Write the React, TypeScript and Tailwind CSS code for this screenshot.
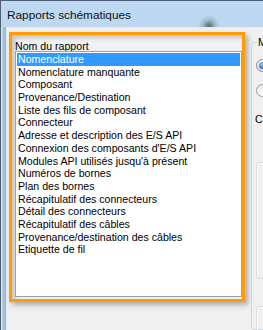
import React from "react";

const items = [
  "Nomenclature",
  "Nomenclature manquante",
  "Composant",
  "Provenance/Destination",
  "Liste des fils de composant",
  "Connecteur",
  "Adresse et description des E/S API",
  "Connexion des composants d'E/S API",
  "Modules API utilisés jusqu'à présent",
  "Numéros de bornes",
  "Plan des bornes",
  "Récapitulatif des connecteurs",
  "Détail des connecteurs",
  "Récapitulatif des câbles",
  "Provenance/destination des câbles",
  "Etiquette de fil",
];

export default function App() {
  return (
    <div
      className="w-[263px] h-[330px] overflow-hidden flex flex-col border-t border-l border-[#4e5f73] bg-[#bed8f1] text-black"
      style={{ fontFamily: '"Liberation Sans", Arial, sans-serif' }}
    >
      {/* title bar */}
      <div className="h-[26px] shrink-0 pl-[6px] pt-[7px] text-[11.8px] leading-[14px] text-[#111] bg-[radial-gradient(circle_at_208px_25px,rgba(55,70,55,0.75),rgba(90,110,100,0.3)_6px,transparent_11px)]">
        Rapports schématiques
      </div>
      <div className="flex flex-1 min-h-0">
        {/* left frame */}
        <div className="w-[5px] shrink-0 bg-[linear-gradient(to_right,#d2e4f5_0px,#d2e4f5_1px,#a9c1dc_2px,#9db5d2_5px)]" />
        {/* content */}
        <div className="flex-1 min-w-0 flex border-l border-t border-[#e3ebf3] bg-[#f0f0f0] pl-[2px] pt-[4px]">
          {/* orange highlight */}
          <div className="w-[236px] h-[270px] shrink-0 border-[3px] border-[#ff9b05] flex flex-col shadow-[3px_3px_5px_rgba(0,0,0,0.28),inset_3px_3px_4px_rgba(0,0,0,0.18)]">
            <div className="pl-[3px] pt-[6px] text-[10.6px] leading-[10px]">Nom du rapport</div>
            <div className="ml-[3px] w-[227px] h-[246px] border border-[#9ba0a8] bg-white p-[1px] flex flex-col">
              {items.map((t, i) => (
                <div
                  key={t}
                  className={
                    i === 0
                      ? "h-[12.7px] leading-[12.7px] pl-[1px] text-[10.6px] whitespace-nowrap bg-[#3399ff] text-white"
                      : "h-[12.7px] leading-[12.7px] pl-[1px] text-[10.6px] whitespace-nowrap"
                  }
                >
                  {t}
                </div>
              ))}
            </div>
          </div>
          {/* right groupbox */}
          <fieldset className="ml-[6px] mt-[4px] w-[80px] shrink-0 border border-[#d0d8de] rounded-[3px] px-[5px] pt-0 flex flex-col">
            <legend className="px-[1px] text-[10.6px] leading-[12px]">Mode</legend>
            <div className="mt-[11px] -ml-[1px] w-[13px] h-[13px] shrink-0 rounded-full border border-[#8a8c8e] bg-[linear-gradient(#f4f4f4,#dcdcdc)] flex items-center justify-center">
              <div className="w-[7px] h-[7px] rounded-full bg-[radial-gradient(circle_at_40%_35%,#8cd0ff,#2c82cf_55%,#144f86)]" />
            </div>
            <div className="mt-[12px] -ml-[1px] w-[13px] h-[13px] shrink-0 rounded-full border border-[#9a9c9e] bg-[linear-gradient(#e8e8e8,#ffffff)]" />
            <div className="mt-[16px] -ml-[2px] text-[10.6px] leading-[12px]">Calque</div>
            <div className="mt-[37px] -ml-[1px] h-[117px] w-[60px] shrink-0 rounded-[3px] border border-[#d5dde3] shadow-[inset_1px_1px_0_#ffffff]" />
            <div className="mt-[27px] -ml-[1px] h-[60px] w-[60px] shrink-0 rounded-[3px] border border-[#d5dde3] shadow-[inset_1px_1px_0_#ffffff]" />
          </fieldset>
        </div>
      </div>
    </div>
  );
}
